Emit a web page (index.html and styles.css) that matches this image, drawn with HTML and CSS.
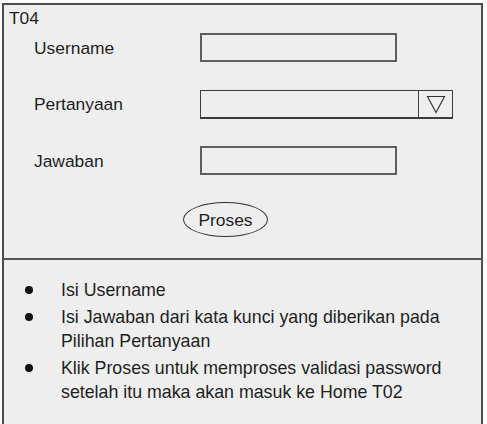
FILE: index.html
```html
<!DOCTYPE html>
<html lang="id">
<head>
<meta charset="utf-8">
<title>T04 - Lupa Password</title>
<link rel="stylesheet" href="styles.css">
</head>
<body>
<div class="frame">
  <section class="top">
    <div class="title">T04</div>
    <div class="form">
      <label class="label">Username</label>
      <div class="field"></div>
      <label class="label">Pertanyaan</label>
      <div class="select">
        <div class="select-value"></div>
        <div class="select-arrow">
          <svg width="20" height="20" viewBox="0 0 20 20"><path d="M1.5 2.5 H18.5 L10 18.5 Z" fill="none" stroke="#333" stroke-width="1.1"/></svg>
        </div>
      </div>
      <label class="label">Jawaban</label>
      <div class="field"></div>
    </div>
    <div class="actions">
      <div class="btn-proses">Proses</div>
    </div>
  </section>
  <section class="notes">
    <ul class="note-list">
      <li><span class="dot"></span><span class="note-text">Isi Username</span></li>
      <li><span class="dot"></span><span class="note-text">Isi Jawaban dari kata kunci yang diberikan pada Pilihan Pertanyaan</span></li>
      <li><span class="dot"></span><span class="note-text">Klik Proses untuk memproses validasi password setelah itu maka akan masuk ke Home T02</span></li>
    </ul>
  </section>
</div>
</body>
</html>
```

FILE: styles.css
```css
html, body {
  margin: 0;
  padding: 0;
  background: #fbfbfb;
}

body {
  font-family: "Liberation Sans", Arial, sans-serif;
  font-size: 17.4px;
  color: #1e1e1e;
  overflow: hidden;
  height: 424px;
}

.frame {
  box-sizing: border-box;
  width: 481px;
  height: 440px;
  margin: 3px 0 0 2px;
  border: 2px solid #4d4d4d;
  border-bottom: none;
  background: #eeeeee;
}

.top {
  box-sizing: border-box;
  height: 255px;
  border-bottom: 2px solid #555;
  padding-top: 3px;
}

.title {
  line-height: 20px;
  padding-left: 5px;
}

.form {
  display: grid;
  grid-template-columns: 166px auto;
  grid-auto-rows: 29px;
  row-gap: 27.5px;
  align-items: center;
  margin-top: 5px;
  padding-left: 30px;
}

.label {
  line-height: 20px;
}

.field {
  box-sizing: border-box;
  width: 197px;
  height: 29px;
  border: 2px solid #5e5e5e;
}

.select {
  box-sizing: border-box;
  display: flex;
  width: 253px;
  height: 29px;
  border: 1.5px solid #3c3c3c;
  border-bottom-width: 2px;
}

.select-value {
  flex: 1;
}

.select-arrow {
  box-sizing: border-box;
  width: 34px;
  border-left: 1.5px solid #444;
  display: flex;
  align-items: center;
  justify-content: center;
}

.actions {
  margin-top: 27px;
  padding-left: 179px;
}

.btn-proses {
  box-sizing: border-box;
  width: 85px;
  height: 35px;
  border: 1.5px solid #333;
  border-radius: 50%;
  display: flex;
  align-items: center;
  justify-content: center;
  line-height: 20px;
}

.notes {
  padding-top: 18px;
}

.note-list {
  list-style: none;
  margin: 0;
  padding: 0;
  display: flex;
  flex-direction: column;
  gap: 3px;
  font-size: 17.8px;
}

.note-list li {
  display: flex;
  align-items: flex-start;
  line-height: 24px;
}

.dot {
  flex: none;
  width: 8px;
  height: 8px;
  border-radius: 50%;
  background: #111;
  margin: 8px 0 0 21px;
}

.note-text {
  margin-left: 28px;
  width: 400px;
}
```
